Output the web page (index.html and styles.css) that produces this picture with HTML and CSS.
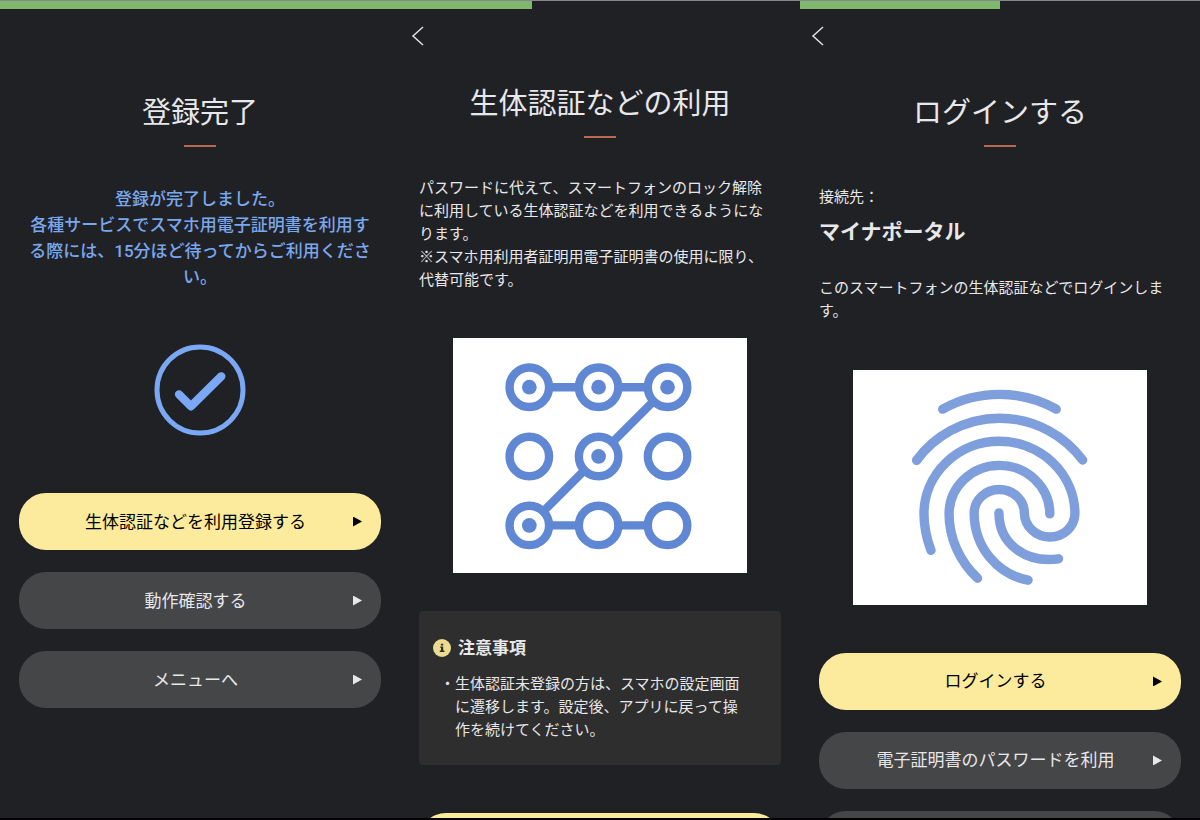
FILE: index.html
```html
<!DOCTYPE html>
<html lang="ja">
<head>
<meta charset="utf-8">
<meta name="viewport" content="width=device-width, initial-scale=1">
<title>スマホ用電子証明書</title>
<link rel="stylesheet" href="styles.css">
</head>
<body>
<main class="screens">
  <section class="screen">
    <div class="progress"><div class="progress-bar" style="width: 100%"></div></div>
    <div class="topbar"></div>
    <div class="content">
      <h1 class="title">登録完了</h1>
      <p class="message">登録が完了しました。<br>各種サービスでスマホ用電子証明書を利用す<br>る際には、15分ほど待ってからご利用くださ<br>い。</p>
      <svg class="done" viewBox="462 71 276 276" aria-hidden="true">
        <circle cx="600" cy="209" r="129" stroke-width="15"/>
        <path d="M537 222L573 258L664 168" stroke-width="25"/>
      </svg>
      <div class="actions">
        <button class="btn btn-primary" type="button"><span class="btn-label">生体認証などを利用登録する</span><span class="arrow"></span></button>
        <button class="btn" type="button"><span class="btn-label">動作確認する</span><span class="arrow"></span></button>
        <button class="btn" type="button"><span class="btn-label">メニューへ</span><span class="arrow"></span></button>
      </div>
    </div>
  </section>

  <section class="screen">
    <div class="progress"><div class="progress-bar" style="width: 33%"></div></div>
    <div class="topbar">
      <button class="back" type="button" aria-label="戻る"><svg class="back-icon" viewBox="0 0 14 20"><path d="M12 1L2 10L12 19"/></svg></button>
    </div>
    <div class="content content-raised">
      <h1 class="title">生体認証などの利用</h1>
      <p class="text">パスワードに代えて、スマートフォンのロック解除<br>に利用している生体認証などを利用できるようにな<br>ります。<br>※スマホ用利用者証明用電子証明書の使用に限り、<br>代替可能です。</p>
      <svg class="picture pattern" viewBox="43 22 876 702" role="img" aria-label="パターン認証">
        <g class="pattern-line">
          <path d="M271 169H684L271 582H684"/>
        </g>
        <g class="pattern-ring">
          <circle cx="271" cy="169" r="59"/><circle cx="478" cy="169" r="59"/><circle cx="684" cy="169" r="59"/>
          <circle cx="271" cy="376" r="59"/><circle cx="478" cy="376" r="59"/><circle cx="684" cy="376" r="59"/>
          <circle cx="271" cy="582" r="59"/><circle cx="478" cy="582" r="59"/><circle cx="684" cy="582" r="59"/>
        </g>
        <g class="pattern-dot">
          <circle cx="271" cy="169" r="22"/><circle cx="478" cy="169" r="22"/><circle cx="684" cy="169" r="22"/>
          <circle cx="478" cy="376" r="22"/><circle cx="271" cy="582" r="22"/>
        </g>
      </svg>
      <aside class="notice">
        <h2 class="notice-title">
          <svg class="info" viewBox="0 0 18 18" aria-hidden="true"><circle cx="9" cy="9" r="9"/><path d="M7.2 7.4H10.2V11.6H11.4V13H6.8V11.6H8V8.8H7.2ZM7.9 4.8H10.2V6.5H7.9Z"/></svg>
          注意事項
        </h2>
        <ul class="notice-list">
          <li>生体認証未登録の方は、スマホの設定画面<br>に遷移します。設定後、アプリに戻って操<br>作を続けてください。</li>
        </ul>
      </aside>
      <div class="actions actions-near">
        <button class="btn btn-primary" type="button" aria-label="次へ"></button>
      </div>
    </div>
  </section>

  <section class="screen">
    <div class="progress"><div class="progress-bar" style="width: 50%"></div></div>
    <div class="topbar">
      <button class="back" type="button" aria-label="戻る"><svg class="back-icon" viewBox="0 0 14 20"><path d="M12 1L2 10L12 19"/></svg></button>
    </div>
    <div class="content">
      <h1 class="title">ログインする</h1>
      <p class="text">接続先：</p>
      <p class="service">マイナポータル</p>
      <p class="text text-after">このスマートフォンの生体認証などでログインしま<br>す。</p>
      <svg class="picture finger" viewBox="43 30 876 702" role="img" aria-label="指紋認証">
        <path d="M311 147A348 348 0 0 1 650 147"/>
        <path d="M233 300A308 308 0 0 1 729 299"/>
        <path d="M276 569Q255 512 255 460A225 217 0 0 1 480 243A226 217 0 0 1 706 460A75 71 0 0 1 630 529A75 73 0 0 1 555 457A75 70 0 0 0 480 387A75 70 0 0 0 405 457C405 560 475 640 566 658"/>
        <path d="M415 652C360 600 330 530 330 460A150 145 0 0 1 480 315A151 145 0 0 1 631 460"/>
        <path d="M479 457C479 550 560 608 657 594"/>
      </svg>
      <div class="actions actions-near">
        <button class="btn btn-primary" type="button"><span class="btn-label">ログインする</span><span class="arrow"></span></button>
        <button class="btn" type="button"><span class="btn-label">電子証明書のパスワードを利用</span><span class="arrow"></span></button>
        <button class="btn" type="button" aria-label="キャンセル"></button>
      </div>
    </div>
  </section>
</main>
</body>
</html>
```
FILE: styles.css
```css
* {
  box-sizing: border-box;
}

body {
  margin: 0;
  background: #000;
  color: #e8e8ea;
  font-family: Roboto, "Noto Sans CJK JP", sans-serif;
  font-size: 15px;
  line-height: 23px;
}

h1, h2, p, ul {
  margin: 0;
  padding: 0;
}

button {
  border: 0;
  padding: 0;
  background: none;
  color: inherit;
  font: inherit;
}

.screens {
  display: grid;
  grid-template-columns: repeat(3, 1fr);
  height: 100vh;
  border-bottom: 2px solid #000;
  overflow: hidden;
}

.screen {
  min-width: 0;
  background: #202125;
  overflow: hidden;
}

.progress {
  height: 9px;
  border-top: 1px solid #868789;
}

.progress-bar {
  height: 8px;
  background: #7fb76e;
}

.topbar {
  display: flex;
  align-items: center;
  height: 54px;
  padding-left: 11px;
}

.back {
  display: flex;
}

.back-icon {
  width: 14px;
  height: 20px;
  fill: none;
  stroke: #e0e0e2;
  stroke-width: 1.5;
}

.content {
  display: flex;
  flex-direction: column;
  padding: 30px 19px 0;
}

.content-raised {
  padding-top: 21px;
}

.title {
  display: flex;
  flex-direction: column;
  align-items: center;
  gap: 12px;
  margin-bottom: 39px;
  font-size: 29px;
  font-weight: 400;
  line-height: 40px;
}

.title::after {
  content: "";
  width: 32px;
  height: 2px;
  background: #b9694f;
}

.message {
  color: #7aa8ee;
  font-size: 17px;
  font-weight: 500;
  line-height: 26px;
  text-align: center;
}

.done {
  align-self: center;
  width: 92px;
  margin: 54px 0 57px;
  fill: none;
  stroke: #7aa8f4;
  stroke-linecap: round;
  stroke-linejoin: round;
}

.service {
  margin-top: 8px;
  font-size: 21px;
  font-weight: 700;
  line-height: 30px;
}

.text-after {
  margin-top: 30px;
}

.picture {
  align-self: center;
  width: 81%;
  margin-top: 47px;
  background: #fff;
}

.pattern {
  margin-top: 46px;
}

.pattern-line,
.pattern-ring {
  fill: #fff;
  stroke: #5f87d3;
  stroke-width: 25;
}

.pattern-line {
  fill: none;
}

.pattern-dot {
  fill: #5f87d3;
}

.finger {
  fill: none;
  stroke: #7f9fdc;
  stroke-width: 28;
  stroke-linecap: round;
}

.notice {
  margin-top: 38px;
  padding: 24px 14px 23px;
  border-radius: 4px;
  background: #2e2e2e;
}

.notice-title {
  display: flex;
  align-items: center;
  gap: 7px;
  margin-bottom: 12px;
  font-size: 17px;
  font-weight: 700;
  line-height: 26px;
}

.info {
  width: 18px;
  height: 18px;
  fill: #ecdc90;
}

.info path {
  fill: #2e2e2e;
}

.notice-list {
  padding-left: 22px;
  list-style: none;
}

.notice-list li::before {
  content: "・";
  float: left;
  margin-left: -15px;
}

.actions {
  display: flex;
  flex-direction: column;
  gap: 22px;
}

.actions-near {
  margin-top: 48px;
}

.btn {
  display: flex;
  align-items: center;
  min-height: 57px;
  padding: 0 19px 0 0;
  border-radius: 27px;
  background: #454648;
  font-size: 17px;
  line-height: 26px;
}

.btn-primary {
  background: #fceb9c;
  color: #000;
}

.btn-label {
  flex: 1;
  padding-left: 19px;
  text-align: center;
}

.arrow {
  width: 9px;
  height: 10px;
  background: currentColor;
  clip-path: polygon(0 0, 100% 50%, 0 100%);
}
```
